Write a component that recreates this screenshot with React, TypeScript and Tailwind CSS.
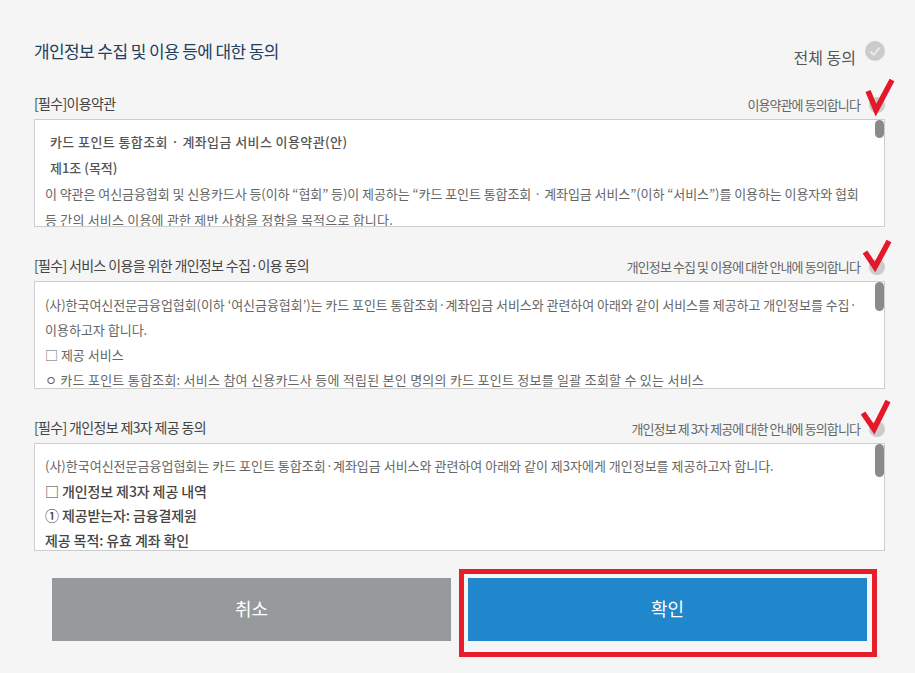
const font = "font-['Noto_Sans_CJK_KR','Noto_Sans',sans-serif]";

function Circle({ big }: { big?: boolean }) {
  return (
    <span className={`flex items-center justify-center rounded-full bg-[#cbcbcb] ${big ? "w-5 h-5" : "w-4 h-4"}`}>
      {big && (
        <svg viewBox="0 0 20 20" className="w-5 h-5" fill="none" stroke="#e9e9e9" strokeWidth="2">
          <path d="M5.5 10.5l3.2 3.2 6-7" />
        </svg>
      )}
    </span>
  );
}

function RedCheck({ points }: { points: string }) {
  return (
    <svg viewBox="0 0 30 36" className="absolute left-[-4px] top-[-20px] w-[30px] h-[36px] overflow-visible" fill="none" stroke="#e4172b" strokeWidth="5.5" strokeLinejoin="miter">
      <polyline points={points} />
    </svg>
  );
}

function Section({ label, agree, points, thumb, children, className }: {
  label: string;
  agree: string;
  points: string;
  thumb: string;
  children: React.ReactNode;
  className?: string;
}) {
  return (
    <section className={className}>
      <div className="flex items-center justify-between h-[24px] pb-[4px]">
        <h3 className="pb-[3px] text-[14px] text-[#444] tracking-[-0.65px]">{label}</h3>
        <div className="flex items-center gap-[9px]">
          <span className="text-[13px] text-[#666] tracking-[-0.9px]">{agree}</span>
          <span className="relative">
            <Circle />
            <RedCheck points={points} />
          </span>
        </div>
      </div>
      <div className="relative h-[108px] overflow-hidden bg-white border border-[#cdcdcd]">
        <div className="pl-[10px] pr-[20px] text-[13px] text-[#666]">{children}</div>
        <div className={`absolute right-0 top-0 w-[9px] rounded-full bg-[#8a8a8a] ${thumb}`} />
      </div>
    </section>
  );
}

export default function App() {
  return (
    <div className={`${font} h-[673px] bg-[#f5f5f5] overflow-hidden`}>
      <div className="w-[851px] ml-[34px] pt-[40px]">
        <div className="flex items-start justify-between h-[55px]">
          <h2 className="text-[17px] leading-[22px] text-[#23405f] tracking-[-0.6px]">개인정보 수집 및 이용 등에 대한 동의</h2>
          <div className="flex items-start gap-[9px]">
            <span className="text-[16px] leading-[24px] text-[#555] pt-[5px]">전체 동의</span>
            <span className="mt-[1px]">
              <Circle big />
            </span>
          </div>
        </div>

        <Section label="[필수]이용약관" agree="이용약관에 동의합니다" points="3,14 11,33 27,3" thumb="h-[18px]">
          <div className="pt-[9px] leading-[26px]">
            <p className="pl-[5px] font-medium text-[#555] tracking-[0.4px]">카드 포인트 통합조회 · 계좌입금 서비스 이용약관(안)</p>
            <p className="pl-[5px] font-medium text-[#555]">제1조 (목적)</p>
            <p className="whitespace-nowrap tracking-[-0.07px]">이 약관은 여신금융협회 및 신용카드사 등(이하 “협회” 등)이 제공하는 “카드 포인트 통합조회 · 계좌입금 서비스”(이하 “서비스”)를 이용하는 이용자와 협회</p>
            <p className="tracking-[0.2px]">등 간의 서비스 이용에 관한 제반 사항을 정함을 목적으로 합니다.</p>
          </div>
        </Section>

        <Section className="mt-[30px]" label="[필수] 서비스 이용을 위한 개인정보 수집·이용 동의" agree="개인정보 수집 및 이용에 대한 안내에 동의합니다" points="0,13 10,28 24,2" thumb="h-[29px]">
          <div className="pt-[10px] leading-[25px]">
            <p className="whitespace-nowrap tracking-[-0.05px]">(사)한국여신전문금융업협회(이하 ‘여신금융협회’)는 카드 포인트 통합조회·계좌입금 서비스와 관련하여 아래와 같이 서비스를 제공하고 개인정보를 수집·</p>
            <p>이용하고자 합니다.</p>
            <p>□ 제공 서비스</p>
            <p className="whitespace-nowrap tracking-[0.25px]">ㅇ 카드 포인트 통합조회: 서비스 참여 신용카드사 등에 적립된 본인 명의의 카드 포인트 정보를 일괄 조회할 수 있는 서비스</p>
          </div>
        </Section>

        <Section className="mt-[30px]" label="[필수] 개인정보 제3자 제공 동의" agree="개인정보 제 3자 제공에 대한 안내에 동의합니다" points="-2,12 9,28 23,0" thumb="h-[33px]">
          <div className="pt-[10px] leading-[24.5px]">
            <p className="whitespace-nowrap">(사)한국여신전문금융업협회는 카드 포인트 통합조회·계좌입금 서비스와 관련하여 아래와 같이 제3자에게 개인정보를 제공하고자 합니다.</p>
            <p className="font-medium text-[14px] text-[#444] tracking-[-0.1px]">□ 개인정보 제3자 제공 내역</p>
            <p className="font-medium text-[14px] text-[#444] tracking-[-0.1px]">① 제공받는자: 금융결제원</p>
            <p className="font-medium text-[14px] text-[#444] tracking-[-0.1px]">제공 목적: 유효 계좌 확인</p>
          </div>
        </Section>
      </div>

      <div className="flex gap-[17px] ml-[52px] mt-[27px]">
        <button className="w-[399px] h-[63px] pb-[2px] bg-[#969a9d] text-white text-[18px]">취소</button>
        <div className="relative">
          <button className="w-[399px] h-[63px] pb-[2px] bg-[#2187cc] text-white text-[18px]">확인</button>
          <div className="absolute left-[-9px] right-[-10px] top-[-9px] bottom-[-16px] border-[5px] border-[#e71d2b]" />
        </div>
      </div>
    </div>
  );
}
